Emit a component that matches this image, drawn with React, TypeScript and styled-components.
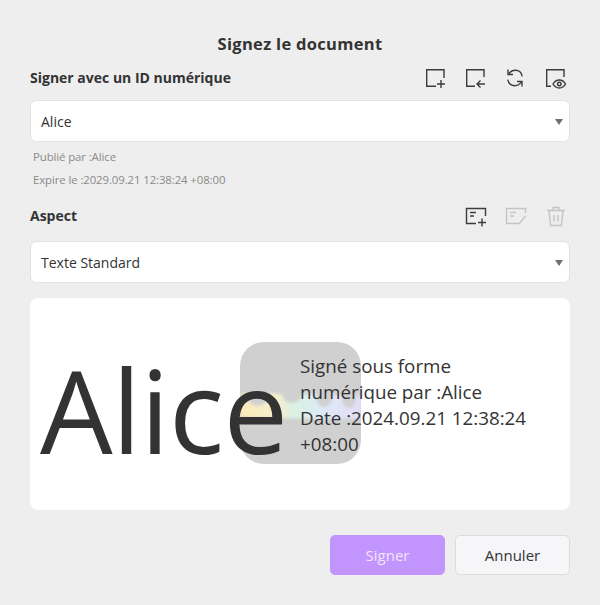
import React from "react";
import styled, { createGlobalStyle } from "styled-components";

const Global = createGlobalStyle`
  html, body { margin: 0; padding: 0; background: #eeeeee; }
  * { box-sizing: border-box; }
`;

const Dialog = styled.div`
  width: 600px;
  height: 605px;
  background: #eeeeee;
  padding: 32px 30px 0;
  font-family: "Open Sans", "Noto Sans", sans-serif;
  color: #333;
  display: flex;
  flex-direction: column;
`;

const Title = styled.div`
  font-size: 16.5px;
  font-weight: 700;
  line-height: 24px;
  text-align: center;
  letter-spacing: 0.3px;
`;

const HeaderRow = styled.div<{ $mt: number }>`
  display: flex;
  justify-content: space-between;
  align-items: center;
  height: 32px;
  margin-top: ${(p) => p.$mt}px;
`;

const Label = styled.div`
  font-size: 14px;
  font-weight: 700;
  line-height: 20px;
`;

const Tools = styled.div<{ $pr: number }>`
  display: flex;
  gap: 16px;
  padding-right: ${(p) => p.$pr}px;
`;

const ToolIcon = styled.svg`
  width: 24px;
  height: 24px;
  fill: none;
  stroke: ${(p) => p.color || "#3c3c3c"};
  stroke-width: 1.4;
  display: block;
`;

const Select = styled.div<{ $mt: number }>`
  height: 42px;
  margin-top: ${(p) => p.$mt}px;
  background: #fff;
  border: 1px solid #e2e2e2;
  border-radius: 6px;
  display: flex;
  align-items: center;
  justify-content: space-between;
  padding: 1px 6px 0 10px;
  font-size: 14px;
  color: #333;
`;

const Caret = styled.span`
  width: 0;
  height: 0;
  border-left: 4.5px solid transparent;
  border-right: 4.5px solid transparent;
  border-top: 6px solid #707070;
`;

const Meta = styled.div`
  padding: 3px 0 0 3px;
  font-size: 11.4px;
  line-height: 23px;
  color: #8a8a8a;
  letter-spacing: -0.1px;
`;

const Preview = styled.div`
  position: relative;
  height: 212px;
  margin-top: 15px;
  background: #fff;
  border-radius: 8px;
  display: flex;
  align-items: center;
  padding-left: 10px;
  overflow: hidden;
`;

const Watermark = styled.div`
  position: absolute;
  left: 210px;
  top: 44px;
  width: 121px;
  height: 122px;
  border-radius: 24px;
  background: #d0d0d0;
  overflow: hidden;
`;

const BigName = styled.div`
  position: relative;
  font-size: 115px;
  line-height: 120px;
  width: 260px;
  color: #333;
  margin-top: 12px;
  letter-spacing: -0.6px;
  white-space: nowrap;
`;

const SignText = styled.div`
  position: relative;
  width: 240px;
  font-size: 18.8px;
  line-height: 26px;
  color: #333;
  margin-top: 2px;
  white-space: nowrap;
`;

const Footer = styled.div`
  display: flex;
  justify-content: flex-end;
  gap: 10px;
  margin-top: 25px;
`;

const Button = styled.div<{ $primary?: boolean }>`
  width: 115px;
  height: 40px;
  border-radius: 5px;
  display: flex;
  align-items: center;
  justify-content: center;
  font-size: 15px;
  background: ${(p) => (p.$primary ? "#c294fd" : "#f6f5f7")};
  color: ${(p) => (p.$primary ? "#f2e6ff" : "#333")};
  border: 1px solid ${(p) => (p.$primary ? "#c294fd" : "#dcdcdc")};
`;

export default function App() {
  return (
    <>
      <Global />
      <Dialog>
        <Title>Signez le document</Title>
        <HeaderRow $mt={6}>
          <Label>Signer avec un ID numérique</Label>
          <Tools $pr={3}>
            <ToolIcon viewBox="0 0 24 24">
              <path d="M21 12V3.700H3.700V20.300H13" />
              <path d="M14 18h8M18 14v8" />
            </ToolIcon>
            <ToolIcon viewBox="0 0 24 24">
              <path d="M21 11V3.700H3.700V20.300H12" />
              <path d="M22 18h-8M17.500 14.500 14 18l3.500 3.500" />
            </ToolIcon>
            <ToolIcon viewBox="0 0 24 24">
              <path d="M5 3.500v5h5" />
              <path d="M5.500 8.500C7 5.800 9.500 4.300 12.500 4.300c3.500 0 6 2.500 6.700 6" />
              <path d="M19 20.500v-5h-5" />
              <path d="M18.500 15.500C17 18.200 14.500 19.700 11.500 19.700c-3.500 0-6-2.500-6.700-6" />
            </ToolIcon>
            <ToolIcon viewBox="0 0 24 24">
              <path d="M21 11V3.700H3.700V20.300H8" />
              <path d="M10 18c1.600-2.700 3.800-4 6.300-4s4.700 1.300 6.200 4c-1.500 2.700-3.700 4-6.200 4s-4.700-1.300-6.300-4Z" />
              <circle cx="16.300" cy="18" r="1.800" />
            </ToolIcon>
          </Tools>
        </HeaderRow>
        <Select $mt={6}>
          Alice
          <Caret />
        </Select>
        <Meta>
          <div>Publié par :Alice</div>
          <div>Expire le :2029.09.21 12:38:24 +08:00</div>
        </Meta>
        <HeaderRow $mt={9}>
          <Label>Aspect</Label>
          <Tools $pr={2}>
            <ToolIcon viewBox="0 0 24 24">
              <path d="M21.500 12V4.500H2.500V19.500H12" />
              <path d="M6 8.500h6M6 12h4M14 18.500h8M18 14.500v8" />
            </ToolIcon>
            <ToolIcon viewBox="0 0 24 24" color="#c4c4c4">
              <path d="M16 19.500H2.500V4.500H21.500V9" />
              <path d="M6 8.500h6M6 12h4M15 20l6.500-8" />
            </ToolIcon>
            <ToolIcon viewBox="0 0 24 24" color="#c4c4c4">
              <path d="M3 6.500h18M9 6V3.500h6V6M5 6.500l1.500 15h11l1.500-15M10 11v6.500M14 11v6.500" />
            </ToolIcon>
          </Tools>
        </HeaderRow>
        <Select $mt={9}>
          Texte Standard
          <Caret />
        </Select>
        <Preview>
          <Watermark>
            <svg width="121" height="122" viewBox="0 0 121 122">
              <defs>
                <linearGradient id="band" x1="0" x2="1" y1="0" y2="0">
                  <stop offset="0" stopColor="#fbeab8" />
                  <stop offset="0.3" stopColor="#f6eecb" />
                  <stop offset="0.45" stopColor="#d9f2e4" />
                  <stop offset="0.7" stopColor="#dfe8f8" />
                  <stop offset="1" stopColor="#e4def6" />
                </linearGradient>
                <filter id="soft">
                  <feGaussianBlur stdDeviation="1.500" />
                </filter>
              </defs>
              <g filter="url(#soft)">
                <path
                  d="M0 52C5 51 28 50 36 52C44 53 65 52 72 52C84 52 108 53 121 54V76C90 78 40 76 0 75Z"
                  fill="url(#band)"
                />
                <ellipse cx="18" cy="54" rx="11" ry="10" fill="#d0d0d0" />
                <ellipse cx="52" cy="52" rx="10" ry="9" fill="#d0d0d0" />
                <ellipse cx="84" cy="54" rx="8" ry="11" fill="#d0d0d0" />
                <ellipse cx="109" cy="56" rx="7" ry="10" fill="#d0d0d0" />
              </g>
            </svg>
          </Watermark>
          <BigName>Alice</BigName>
          <SignText>
            Signé sous forme
            <br />
            numérique par :Alice
            <br />
            Date :2024.09.21 12:38:24
            <br />
            +08:00
          </SignText>
        </Preview>
        <Footer>
          <Button $primary>Signer</Button>
          <Button>Annuler</Button>
        </Footer>
      </Dialog>
    </>
  );
}
